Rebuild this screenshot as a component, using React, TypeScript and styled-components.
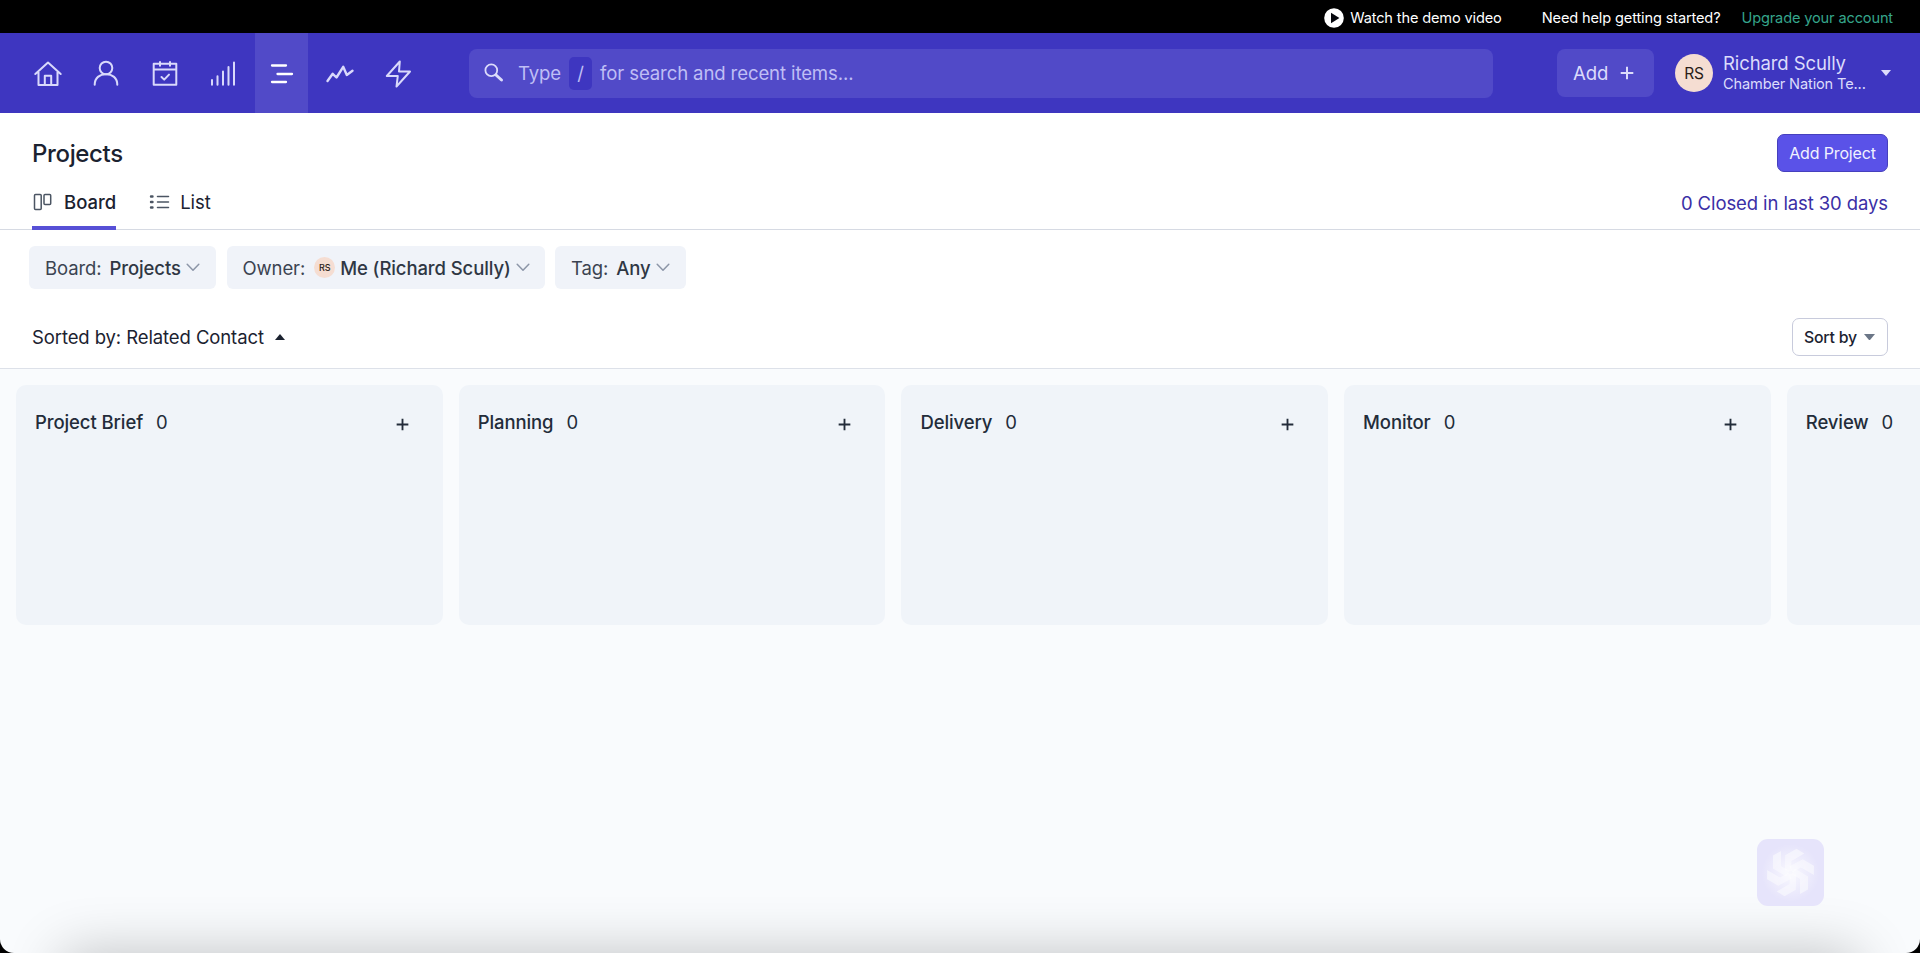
import React from 'react';
import styled, { createGlobalStyle } from 'styled-components';

const GlobalStyle = createGlobalStyle`
  * {
    box-sizing: border-box;
  }
  body {
    margin: 0;
    background: #000;
    color: #1b2230;
    font-family: Inter, "Liberation Sans", sans-serif;
    overflow: hidden;
  }
  button {
    font-family: inherit;
    letter-spacing: inherit;
    margin: 0;
    padding: 0;
    border: 0;
    background: none;
    color: inherit;
  }
`;

const Page = styled.div`
  position: relative;
  display: flex;
  flex-direction: column;
  width: 100%;
  height: 100vh;
  overflow: hidden;
  background: #f9fbfd;
  border-radius: 0 0 14px 14px;
  letter-spacing: -0.1px;
`;

const TopBar = styled.div`
  display: flex;
  flex: none;
  align-items: center;
  justify-content: flex-end;
  height: 33px;
  padding: 3px 27px 0 0;
  background: #000;
  color: #fff;
  font-size: 14.6px;
  letter-spacing: -0.15px;
  line-height: 20px;
  white-space: nowrap;
`;

const DemoLink = styled.span`
  display: flex;
  align-items: center;
  gap: 6px;
  margin-right: 40px;
`;

const UpgradeLink = styled.span`
  margin-left: 21px;
  color: #35a58b;
`;

const Header = styled.header`
  display: flex;
  flex: none;
  align-items: center;
  height: 80px;
  padding: 0 29px 0 21px;
  background: #3e36c0;
  color: #dcdcfb;
`;

const Nav = styled.nav`
  display: flex;
  height: 100%;
  gap: 5.5px;
`;

const NavItem = styled.a<{ $active?: boolean }>`
  display: flex;
  align-items: center;
  justify-content: center;
  width: 53px;
  height: 100%;
  padding-top: 1px;
  background: ${(p) => (p.$active ? '#514ac8' : 'transparent')};
  color: ${(p) => (p.$active ? '#fff' : '#d9d9fb')};
`;

const SearchBox = styled.div`
  display: flex;
  align-items: center;
  width: 1024px;
  height: 49px;
  margin-left: 44px;
  padding-left: 15px;
  border-radius: 8px;
  background: #514ac8;
  color: #bfbef5;
  font-size: 18.6px;
  letter-spacing: -0.13px;
  white-space: nowrap;
`;

const SearchHint = styled.span`
  margin-left: 14px;
`;

const SlashKey = styled.span`
  display: flex;
  align-items: center;
  justify-content: center;
  width: 23px;
  height: 33px;
  margin: 0 8px;
  border-radius: 5px;
  background: #3e36c0;
`;

const HeaderAdd = styled.button`
  display: flex;
  align-items: center;
  gap: 12px;
  width: 97px;
  height: 48px;
  margin-left: auto;
  padding-left: 16px;
  border-radius: 8px;
  background: #514ac8;
  font-size: 18.6px;
`;

const Avatar = styled.span<{ $size: number }>`
  display: inline-flex;
  flex: none;
  align-items: center;
  justify-content: center;
  width: ${(p) => p.$size}px;
  height: ${(p) => p.$size}px;
  border-radius: 50%;
  background: #f5ddd2;
  color: #2b1d18;
  font-size: ${(p) => (p.$size > 30 ? 15.5 : 9)}px;
  font-weight: ${(p) => (p.$size > 30 ? 400 : 500)};
`;

const Account = styled.div`
  display: flex;
  align-items: center;
  margin-left: 21px;
`;

const AccountText = styled.div`
  width: 145px;
  margin: 1px 13px 0 10px;
  white-space: nowrap;
`;

const AccountName = styled.div`
  font-size: 18.5px;
  line-height: 22px;
`;

const AccountCompany = styled.div`
  font-size: 14.6px;
  letter-spacing: -0.15px;
  line-height: 21px;
`;

const PageHeader = styled.section`
  flex: none;
  height: 117px;
  padding: 21px 32px 0;
  background: #fff;
  border-bottom: 1px solid #d6dae3;
`;

const TitleRow = styled.div`
  display: flex;
  align-items: center;
  justify-content: space-between;
  height: 38px;
`;

const Title = styled.h1`
  margin: 2px 0 0;
  font-size: 24px;
  font-weight: 500;
  letter-spacing: -0.35px;
  line-height: 38px;
`;

const AddProject = styled.button`
  width: 111px;
  height: 38px;
  border: 1px solid #4640bd;
  border-radius: 7px;
  background: #5a52e8;
  color: #f1f1ff;
  font-size: 16px;
  letter-spacing: -0.15px;
`;

const TabRow = styled.div`
  display: flex;
  height: 58px;
`;

const Tab = styled.a<{ $active?: boolean }>`
  display: flex;
  align-items: center;
  gap: 10px;
  height: 58px;
  margin-right: 33px;
  padding-top: 6px;
  border-bottom: 4px solid ${(p) => (p.$active ? '#5750d6' : 'transparent')};
  font-size: 18.5px;
  font-weight: ${(p) => (p.$active ? 500 : 400)};
  letter-spacing: -0.02px;
  white-space: nowrap;
`;

const ClosedLink = styled.a`
  margin: 17px 0 0 auto;
  color: #3b2fa6;
  font-size: 18.5px;
  line-height: 28px;
`;

const Filters = styled.section`
  display: flex;
  flex: none;
  gap: 10.5px;
  height: 76px;
  padding: 16px 29px 0;
  background: #fff;
`;

const FilterChip = styled.button<{ $width: number }>`
  display: flex;
  align-items: center;
  width: ${(p) => p.$width}px;
  height: 43px;
  padding-left: 16px;
  border-radius: 6px;
  background: #f0f3f9;
  color: #3b4351;
  font-size: 18.5px;
  white-space: nowrap;

  strong {
    margin: 0 5px 0 8px;
    color: #2f3744;
    font-weight: 500;
  }

  ${Avatar} {
    margin-left: 9px;
  }

  ${Avatar} + strong {
    margin-left: 5px;
  }
`;

const SortRow = styled.section`
  display: flex;
  flex: none;
  align-items: center;
  justify-content: space-between;
  height: 63px;
  padding: 0 32px;
  background: #fff;
  border-bottom: 1px solid #dde1e9;
  font-size: 18.5px;
`;

const SortLabel = styled.span`
  display: flex;
  align-items: center;
  gap: 11px;
`;

const SortButton = styled.button`
  display: flex;
  align-items: center;
  gap: 7px;
  width: 96px;
  height: 38px;
  padding-left: 11px;
  border: 1px solid #c8cbdc;
  border-radius: 7px;
  background: #fff;
  font-size: 15.8px;
  font-weight: 500;
  letter-spacing: -0.2px;
`;

const Board = styled.main`
  display: flex;
  flex: 1;
  gap: 16.2px;
  padding: 16px 0 0 16px;
  overflow: hidden;
`;

const Column = styled.section`
  flex: none;
  width: 426.5px;
  height: 240px;
  border-radius: 10px;
  background: #f0f4f9;
`;

const ColumnHead = styled.div`
  display: flex;
  align-items: center;
  padding: 23px 34px 0 19px;
  color: #232c3a;
  font-size: 18.5px;
  line-height: 28px;

  svg {
    margin: 4px 0 0 auto;
  }
`;

const ColumnName = styled.span`
  margin-right: 13px;
  font-weight: 500;
`;

/* soft shade rising from below the window's lower edge */
const DockShadow = styled.div`
  position: absolute;
  right: 62px;
  bottom: -120px;
  left: 62px;
  height: 120px;
  box-shadow: 0 0 56px rgba(0, 0, 0, 0.23);
`;

const AssistantButton = styled.button`
  position: absolute;
  right: 96px;
  bottom: 47px;
  width: 67px;
  height: 67px;
  border-radius: 11px;
  background: #e6e4fb;
`;

const stroke = {
  fill: 'none',
  stroke: 'currentColor',
  strokeWidth: 2,
  strokeLinecap: 'round' as const,
  strokeLinejoin: 'round' as const,
};

const navIcons = [
  {
    key: 'home',
    shape: <path d="M2.300 15 15 3.600 27.700 15M5.500 13v13h19V13M11.800 26v-9.300h6.400V26" />,
  },
  {
    key: 'contacts',
    shape: (
      <>
        <circle cx="15" cy="9" r="6.300" />
        <path d="M3.700 25.800c0-7 5-10.600 11.300-10.600s11.300 3.600 11.300 10.600" />
      </>
    ),
  },
  {
    key: 'calendar',
    shape: <path d="M3.700 4.800h22.600v21H3.700zM3.700 10.500h22.600M10 3v3.700M20 3v3.700M11.500 18l2.700 2.600 4.800-5" />,
  },
  {
    key: 'pipeline',
    shape: <path d="M4 21v4.800M9.500 17.300v8.500M15 12.500v13.300M20.500 8v17.800M26 3.500v22.300" />,
  },
  {
    key: 'projects',
    active: true,
    shape: <path strokeWidth="2.300" d="M5 6.500h14M10.500 15h14.500M5 23h14" />,
  },
  {
    key: 'reports',
    shape: <path strokeWidth="2.400" d="M2.500 22l5.200-7.200 3.800 3.700 6.700-10.700 3.600 8.200 5.700-4.200" />,
  },
  {
    key: 'automation',
    shape: <path d="M15.800 2.500 2.800 17h11l-1.300 10.500L26 12.500H15z" />,
  },
];

const columns = ['Project Brief', 'Planning', 'Delivery', 'Monitor', 'Review'];

const Chevron = () => (
  <svg width="14" height="9" viewBox="0 0 14 9">
    <path {...stroke} stroke="#8d96a8" strokeWidth="1.500" d="M1.200 1.200 7 7.300l5.800-6.100" />
  </svg>
);

const Caret = ({ up, color = 'currentColor', size = 10 }: { up?: boolean, color?: string, size?: number }) => (
  <svg width={size} height={size * 0.6} viewBox="0 0 10 6">
    <path fill={color} d={up ? 'M0 6 5 0l5 6z' : 'M0 0h10L5 6z'} />
  </svg>
);

const Plus = ({ size }: { size: number }) => (
  <svg width={size} height={size} viewBox="0 0 14 14">
    <path {...stroke} strokeLinecap="butt" d="M7 .7v12.600M.7 7h12.600" />
  </svg>
);

const AssistantIcon = () => (
  <svg width="67" height="67" viewBox="0 0 67 67">
    <defs>
      <radialGradient id="glow">
        <stop offset="0" stopColor="#fff" stopOpacity="0.75" />
        <stop offset="0.6" stopColor="#fff" stopOpacity="0.3" />
        <stop offset="1" stopColor="#fff" stopOpacity="0" />
      </radialGradient>
    </defs>
    <circle cx="33.500" cy="34" r="29" fill="url(#glow)" />
    {[0, 60, 120, 180, 240, 300].map((angle) => (
      <g key={angle} transform={`rotate(${angle} 33.500 33.500)`} fill="#fff">
        <path fillOpacity="0.4" d="M16 16.500 24 12v15l8.500 5-3.500 5.500-13-8z" />
        <path fillOpacity="0.15" d="M16 16.500 24 12v11l-8 7z" />
      </g>
    ))}
  </svg>
);

const App = () => (
  <>
    <GlobalStyle />
    <Page>
      <TopBar>
        <DemoLink>
          <svg width="20" height="20" viewBox="0 0 20 20">
            <circle cx="10" cy="10" r="9.800" fill="#fff" />
            <path d="M7 4.800v10.400l8.400-5.200z" fill="#05070d" />
          </svg>
          Watch the demo video
        </DemoLink>
        <span>Need help getting started?</span>
        <UpgradeLink>Upgrade your account</UpgradeLink>
      </TopBar>

      <Header>
        <Nav>
          {navIcons.map(({ key, active, shape }) => (
            <NavItem key={key} $active={active}>
              <svg width="30" height="30" viewBox="0 0 30 30" {...stroke}>{shape}</svg>
            </NavItem>
          ))}
        </Nav>
        <SearchBox>
          <svg width="20" height="20" viewBox="0 0 20 20" {...stroke} stroke="#dcdcfb">
            <circle cx="7.300" cy="7.300" r="5.900" strokeWidth="1.800" />
            <path d="m12 12 5.500 5" strokeWidth="3" />
          </svg>
          <SearchHint>Type</SearchHint>
          <SlashKey>/</SlashKey>
          <span>for search and recent items...</span>
        </SearchBox>
        <HeaderAdd>
          Add
          <Plus size={14} />
        </HeaderAdd>
        <Account>
          <Avatar $size={38}>RS</Avatar>
          <AccountText>
            <AccountName>Richard Scully</AccountName>
            <AccountCompany>Chamber Nation Te...</AccountCompany>
          </AccountText>
          <Caret />
        </Account>
      </Header>

      <PageHeader>
        <TitleRow>
          <Title>Projects</Title>
          <AddProject>Add Project</AddProject>
        </TitleRow>
        <TabRow>
          <Tab $active>
            <svg width="22" height="18" viewBox="0 0 22 18" {...stroke} stroke="#4b5563" strokeWidth="1.500">
              <rect x="2.500" y="1.500" width="6.700" height="15" rx="1" />
              <rect x="12" y="1.500" width="6.700" height="10" rx="1" />
            </svg>
            Board
          </Tab>
          <Tab>
            <svg width="21" height="16" viewBox="0 0 21 16" {...stroke} stroke="#4b5563" strokeWidth="1.500">
              <path d="M8.500 2.500h11M8.500 8h11M8.500 13.500h11" />
              <path d="M2 2.500h1.500M2 8h1.500M2 13.500h1.500" strokeWidth="2.400" />
            </svg>
            List
          </Tab>
          <ClosedLink>0 Closed in last 30 days</ClosedLink>
        </TabRow>
      </PageHeader>

      <Filters>
        <FilterChip $width={187}>
          Board:
          <strong>Projects</strong>
          <Chevron />
        </FilterChip>
        <FilterChip $width={318}>
          Owner:
          <Avatar $size={21}>RS</Avatar>
          <strong>Me (Richard Scully)</strong>
          <Chevron />
        </FilterChip>
        <FilterChip $width={131}>
          Tag:
          <strong>Any</strong>
          <Chevron />
        </FilterChip>
      </Filters>

      <SortRow>
        <SortLabel>
          Sorted by: Related Contact
          <Caret up />
        </SortLabel>
        <SortButton>
          Sort by
          <Caret color="#6b7687" size={11} />
        </SortButton>
      </SortRow>

      <Board>
        {columns.map((name) => (
          <Column key={name}>
            <ColumnHead>
              <ColumnName>{name}</ColumnName>
              <span>0</span>
              <Plus size={13} />
            </ColumnHead>
          </Column>
        ))}
      </Board>

      <DockShadow />
      <AssistantButton>
        <AssistantIcon />
      </AssistantButton>
    </Page>
  </>
);

export default App;
